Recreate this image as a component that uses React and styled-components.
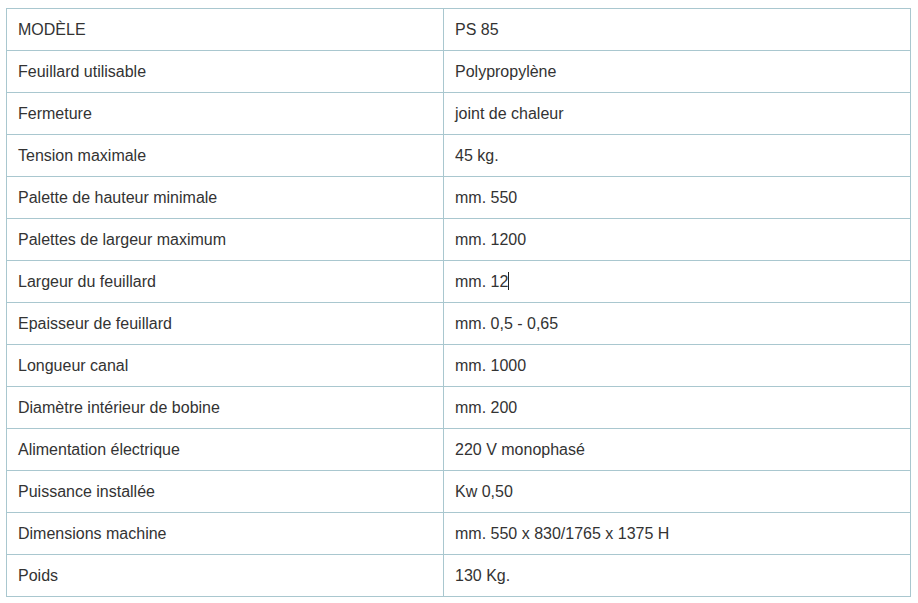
import React from 'react';
import styled, { createGlobalStyle } from 'styled-components';

const GlobalStyle = createGlobalStyle`
body {
    margin:0;
    background:#fff;
    font-family:"Liberation Sans", Arial, sans-serif;
}
`;

const rows = [
    ['MODÈLE', 'PS 85'],
    ['Feuillard utilisable', 'Polypropylène'],
    ['Fermeture', 'joint de chaleur'],
    ['Tension maximale', '45 kg.'],
    ['Palette de hauteur minimale', 'mm. 550'],
    ['Palettes de largeur maximum', 'mm. 1200'],
    ['Largeur du feuillard', 'mm. 12', true],
    ['Epaisseur de feuillard', 'mm. 0,5 - 0,65'],
    ['Longueur canal', 'mm. 1000'],
    ['Diamètre intérieur de bobine', 'mm. 200'],
    ['Alimentation électrique', '220 V monophasé'],
    ['Puissance installée', 'Kw 0,50'],
    ['Dimensions machine', 'mm. 550 x 830/1765 x 1375 H'],
    ['Poids', '130 Kg.'],
];

const App = () => {
    return (
        <Wrapper>
            <GlobalStyle />
            <SpecTable>
                <tbody>
                    {rows.map(([label, value, caret]) => (
                        <Row key={label}>
                            <Cell wide>{label}</Cell>
                            <Cell>
                                {value}
                                {caret && <Caret />}
                            </Cell>
                        </Row>
                    ))}
                </tbody>
            </SpecTable>
        </Wrapper>
    );
};

const Wrapper = styled.div`
padding:8px 0 0 6px;
`;

const SpecTable = styled.table`
border-collapse:collapse;
width:905px;
table-layout:fixed;
`;

const Row = styled.tr`
height:42px;
`;

const Cell = styled.td`
width:${p => (p.wide ? '414px' : 'auto')};
border:1px solid #a9c7cf;
padding:1px 11px 0;
font-size:16px;
color:#333;
vertical-align:middle;
line-height:20px;
`;

const Caret = styled.span`
display:inline-block;
width:1px;
height:18px;
background:#222;
vertical-align:-3px;
`;

export default App;
